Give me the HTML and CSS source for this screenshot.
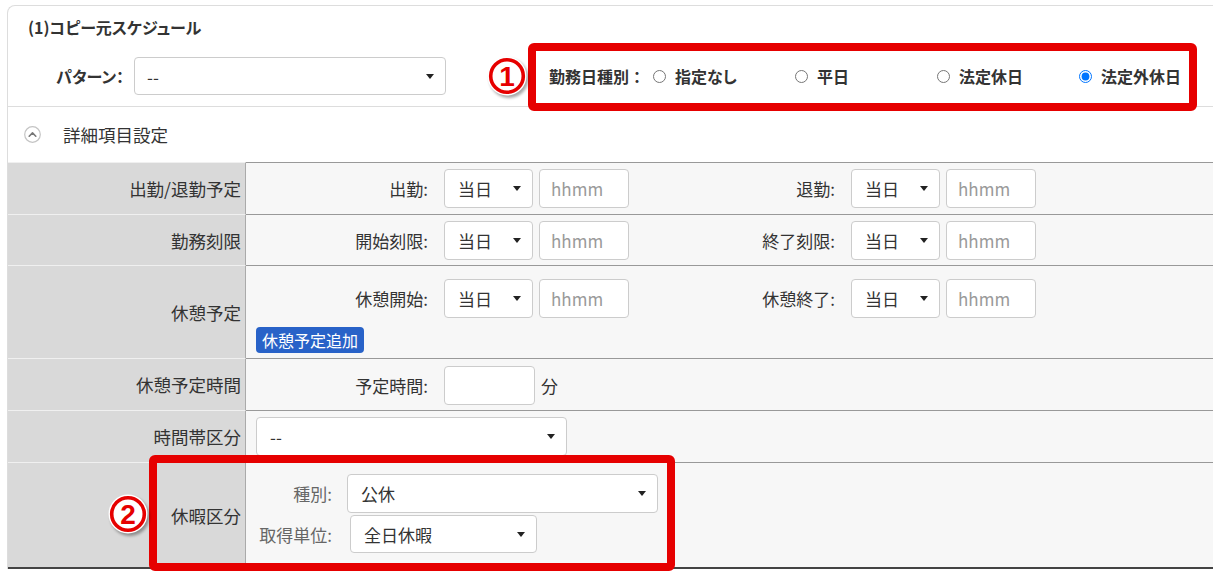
FILE: index.html
```html
<!DOCTYPE html>
<html lang="ja">
	<head>
		<meta charset="UTF-8" />
		<meta name="viewport" content="width=device-width, initial-scale=1.0" />
		<title>コピー元スケジュール</title>
		<link rel="stylesheet" href="styles.css">
	</head>
	<body>
		<div class="page">
			<div class="panel">
				<div class="panel-head">
					<div class="panel-title">(1)コピー元スケジュール</div>
					<div class="pattern-row">
						<span class="pattern-label">パターン：</span>
						<div class="select select-pattern"><span>--</span></div>
						<div class="daytype">
							<span class="daytype-label">勤務日種別：</span>
							<label class="radio"><input type="radio" name="daytype">指定なし</label>
							<label class="radio"><input type="radio" name="daytype">平日</label>
							<label class="radio"><input type="radio" name="daytype">法定休日</label>
							<label class="radio"><input type="radio" name="daytype" checked>法定外休日</label>
						</div>
					</div>
				</div>

				<div class="detail-toggle">
					<svg width="17" height="17" viewBox="0 0 17 17">
						<circle cx="8.5" cy="8.5" r="7.8" fill="#fff" stroke="#c4c4c4" stroke-width="1.2"/>
						<polyline points="5.2,10.2 8.5,6.9 11.8,10.2" fill="none" stroke="#777" stroke-width="1.6" stroke-linecap="round" stroke-linejoin="round"/>
					</svg>
					<span>詳細項目設定</span>
				</div>

				<div class="sched-table">
					<div class="row row-1">
						<div class="row-label">出勤/退勤予定</div>
						<div class="row-body">
							<div class="line">
								<div class="pair">
									<span class="field-label">出勤:</span>
									<div class="select select-day"><span>当日</span></div>
									<input class="time" placeholder="hhmm">
								</div>
								<div class="pair">
									<span class="field-label">退勤:</span>
									<div class="select select-day"><span>当日</span></div>
									<input class="time" placeholder="hhmm">
								</div>
							</div>
						</div>
					</div>

					<div class="row row-2">
						<div class="row-label">勤務刻限</div>
						<div class="row-body">
							<div class="line">
								<div class="pair">
									<span class="field-label">開始刻限:</span>
									<div class="select select-day"><span>当日</span></div>
									<input class="time" placeholder="hhmm">
								</div>
								<div class="pair">
									<span class="field-label">終了刻限:</span>
									<div class="select select-day"><span>当日</span></div>
									<input class="time" placeholder="hhmm">
								</div>
							</div>
						</div>
					</div>

					<div class="row row-3">
						<div class="row-label">休憩予定</div>
						<div class="row-body">
							<div class="line">
								<div class="pair">
									<span class="field-label">休憩開始:</span>
									<div class="select select-day"><span>当日</span></div>
									<input class="time" placeholder="hhmm">
								</div>
								<div class="pair">
									<span class="field-label">休憩終了:</span>
									<div class="select select-day"><span>当日</span></div>
									<input class="time" placeholder="hhmm">
								</div>
							</div>
							<div class="line add-line">
								<button class="add-break">休憩予定追加</button>
							</div>
						</div>
					</div>

					<div class="row row-4">
						<div class="row-label">休憩予定時間</div>
						<div class="row-body">
							<div class="line">
								<div class="pair">
									<span class="field-label">予定時間:</span>
									<input class="time time-minutes">
									<span class="unit">分</span>
								</div>
							</div>
						</div>
					</div>

					<div class="row row-5">
						<div class="row-label">時間帯区分</div>
						<div class="row-body">
							<div class="select select-wide"><span>--</span></div>
						</div>
					</div>

					<div class="row row-6">
						<div class="row-label">休暇区分</div>
						<div class="row-body">
							<div class="line">
								<span class="leave-label">種別:</span>
								<div class="select select-wide"><span>公休</span></div>
							</div>
							<div class="line leave-unit">
								<span class="leave-label">取得単位:</span>
								<div class="select select-unit"><span>全日休暇</span></div>
							</div>
						</div>
					</div>
				</div>
			</div>

			<!-- annotation marks -->
			<div class="mark mark-workday"></div>
			<div class="mark mark-leave"></div>

			<svg class="callout callout-1" width="46" height="46" viewBox="0 0 46 46">
				<defs>
					<filter id="shadow1" x="-30%" y="-30%" width="160%" height="160%">
						<feGaussianBlur stdDeviation="1.4"/>
					</filter>
				</defs>
				<circle cx="24" cy="23.5" r="19.5" fill="#000" opacity="0.35" filter="url(#shadow1)"/>
				<circle cx="22" cy="21" r="19.5" fill="#fff"/>
				<circle cx="22" cy="21" r="16.3" fill="#fff" stroke="#e60000" stroke-width="3.6"/>
				<text class="callout-num" x="22" y="31" text-anchor="middle">1</text>
			</svg>
			<svg class="callout callout-2" width="46" height="46" viewBox="0 0 46 46">
				<defs>
					<filter id="shadow2" x="-30%" y="-30%" width="160%" height="160%">
						<feGaussianBlur stdDeviation="1.4"/>
					</filter>
				</defs>
				<circle cx="24" cy="23.5" r="19.5" fill="#000" opacity="0.35" filter="url(#shadow2)"/>
				<circle cx="22" cy="21" r="19.5" fill="#fff"/>
				<circle cx="22" cy="21" r="16.3" fill="#fff" stroke="#e60000" stroke-width="3.6"/>
				<text class="callout-num" x="22" y="31" text-anchor="middle">2</text>
			</svg>
		</div>
	</body>
</html>
```

FILE: styles.css
```css
body {
	margin: 0;
	background: #fff;
	font-family: "Noto Sans CJK JP", "Noto Sans", sans-serif;
	color: #333;
}
.page {
	position: relative;
	width: 1213px;
	height: 574px;
	overflow: hidden;
}
.panel {
	margin: 5px 0 0 7px;
	border-top: 1px solid #ddd;
	border-left: 1px solid #ddd;
	border-top-left-radius: 8px;
}

/* header */
.panel-head {
	padding: 10px 0 11px;
	border-bottom: 1px solid #ddd;
}
.panel-title {
	padding-left: 20px;
	font-size: 16px;
	font-weight: bold;
	line-height: 22px;
	font-feature-settings: "palt";
}
.pattern-row {
	display: flex;
	align-items: center;
	height: 38px;
	margin-top: 19px;
}
.pattern-row > * {
	flex-shrink: 0;
}
.pattern-label {
	box-sizing: border-box;
	width: 118px;
	padding-right: 2px;
	text-align: right;
	font-size: 16px;
	font-weight: bold;
	font-feature-settings: "palt";
}
.daytype {
	display: flex;
	align-items: center;
	margin-left: 103px;
	font-size: 16px;
	font-weight: bold;
}
.daytype > * {
	flex-shrink: 0;
}
.daytype-label {
	width: 101px;
}
.radio {
	display: flex;
	align-items: center;
	width: 142px;
	font-feature-settings: "palt";
}
.radio input {
	flex-shrink: 0;
	width: 13px;
	height: 13px;
	margin: 0 9px 0 3px;
}

/* selects and inputs */
.select {
	display: flex;
	flex-shrink: 0;
	align-items: center;
	justify-content: space-between;
	box-sizing: border-box;
	height: 39px;
	padding: 0 11px 0 13px;
	background: #fff;
	border: 1px solid #ccc;
	border-radius: 4px;
	font-size: 17px;
	color: #333;
}
.select::after {
	content: "";
	border-left: 4.5px solid transparent;
	border-right: 4.5px solid transparent;
	border-top: 5px solid #222;
}
.select-pattern {
	width: 312px;
	height: 38px;
	margin-left: 8px;
	padding-left: 12px;
}
.select-day {
	width: 89px;
}
.select-wide {
	width: 311px;
}
.select-unit {
	width: 187px;
	height: 38px;
	margin-left: 3px;
}
.time {
	flex-shrink: 0;
	box-sizing: border-box;
	width: 90px;
	height: 39px;
	margin: 0 0 0 6px;
	padding: 0 0 0 11px;
	background: #fff;
	border: 1px solid #ccc;
	border-radius: 4px;
	font: 17px "Noto Sans CJK JP", sans-serif;
	color: #333;
}
.time::placeholder {
	color: #9a9a9a;
}
.time-minutes {
	width: 91px;
	margin-left: 0;
}
.unit {
	margin-left: 6px;
	font-size: 17px;
}

/* detail toggle */
.detail-toggle {
	display: flex;
	align-items: center;
	height: 55px;
	padding-left: 16px;
	font-size: 17.5px;
}
.detail-toggle svg {
	margin-right: 22px;
}

/* schedule table */
.row {
	display: flex;
}
.row-label {
	box-sizing: border-box;
	display: flex;
	flex-shrink: 0;
	align-items: center;
	justify-content: flex-end;
	width: 238px;
	padding-right: 4px;
	background: #d9d9d9;
	border-right: 1px solid #aaa;
	border-bottom: 1px solid #f0f0f0;
	font-size: 17.5px;
}
.row-body {
	flex: 1;
	box-sizing: border-box;
	padding: 6px 10px 0;
	background: #f7f7f7;
	border-bottom: 1px solid #999;
}
.row-1 {
	height: 53px;
}
.row-1 .row-label {
	border-top: 1px solid #f0f0f0;
}
.row-1 .row-body {
	border-top: 1px solid #999;
}
.row-2 {
	height: 51px;
}
.row-3 {
	height: 93px;
}
.row-3 .row-body {
	padding-top: 13px;
}
.row-4 {
	height: 52px;
}
.row-4 .row-body {
	padding-top: 7px;
}
.row-5 {
	height: 52px;
}
.row-6 {
	height: 106px;
}
.row-6 .row-body {
	padding-top: 11px;
}
.row-6 .row-label,
.row-6 .row-body {
	border-bottom: 2px solid #444;
}
.line {
	display: flex;
	align-items: center;
}
.pair {
	display: flex;
	flex-shrink: 0;
	align-items: center;
	width: 407px;
}
.field-label {
	flex-shrink: 0;
	width: 172px;
	margin-right: 16px;
	text-align: right;
	font-size: 17px;
}
.add-line {
	margin-top: 9px;
}
.add-break {
	height: 26px;
	padding: 0 6px;
	background: #2862c8;
	color: #fff;
	border: none;
	border-radius: 4px;
	font: 16px/26px "Noto Sans CJK JP", sans-serif;
	cursor: pointer;
}
.leave-label {
	flex-shrink: 0;
	width: 76px;
	margin-right: 15px;
	text-align: right;
	font-size: 17px;
	color: #666;
}
.leave-unit {
	margin-top: 2px;
}

/* annotations */
.mark {
	position: absolute;
	box-sizing: border-box;
	border: 8px solid #e60000;
	border-radius: 6px;
}
.mark-workday {
	left: 528px;
	top: 43px;
	width: 669px;
	height: 68px;
}
.mark-leave {
	left: 149px;
	top: 455px;
	width: 526px;
	height: 116px;
}
.callout {
	position: absolute;
}
.callout-1 {
	left: 485px;
	top: 55px;
}
.callout-2 {
	left: 106px;
	top: 493px;
}
.callout-num {
	font: bold 28px "Liberation Sans", sans-serif;
	fill: #e60000;
}
```
